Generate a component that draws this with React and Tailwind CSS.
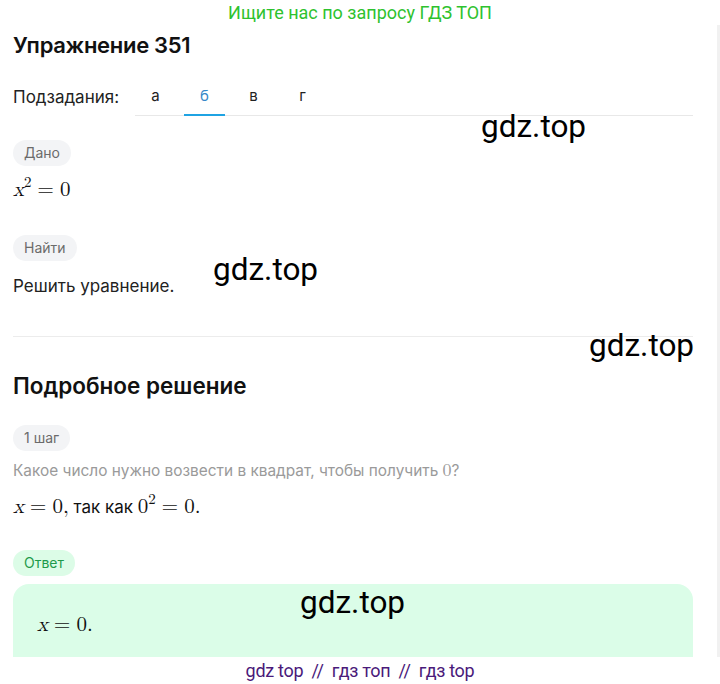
export default function App() {
  const serif = { fontFamily: '"Latin Modern Math", "DejaVu Serif", "Liberation Serif", serif' };
  const pill = "self-start h-[26px] leading-[26px] px-[11px] rounded-full text-[14px]";
  const wm = "absolute text-[31.5px] leading-[34px] text-black";
  const roboto = { fontFamily: 'Roboto, sans-serif' };
  return (
    <div className="relative w-[720px] h-[684px] bg-white overflow-hidden" style={{ fontFamily: 'Inter, "Noto Sans", sans-serif' }}>
      <div className="h-[25px] leading-[25px] text-center text-[18px] text-[#2ec22e]" style={roboto}>
        Ищите нас по запросу ГДЗ ТОП
      </div>
      <div className="flex h-[632px]">
        <div className="flex-1 flex flex-col pl-[13px] pr-[24px]">
          <h1 className="pt-[6px] text-[22px] leading-[28px] font-semibold text-[#111] tracking-[-0.3px]">Упражнение 351</h1>
          <div className="mt-[19px] flex items-end h-[38px]">
            <div className="w-[122px] h-[38px] leading-[38px] text-[17px] text-[#222]">Подзадания:</div>
            <div className="flex-1 flex gap-[8px] h-[38px] border-b border-[#e8e8e8]">
              <div className="w-[41px] h-[38px] leading-[36px] text-center text-[15px] text-[#222]">а</div>
              <div className="w-[41px] h-[38px] leading-[36px] text-center text-[15px] text-[#3589c8] border-b-2 border-[#1fa3e3] -mb-px">б</div>
              <div className="w-[41px] h-[38px] leading-[36px] text-center text-[15px] text-[#222]">в</div>
              <div className="w-[41px] h-[38px] leading-[36px] text-center text-[15px] text-[#222]">г</div>
            </div>
          </div>
          <div className={`mt-[24px] ${pill} bg-[#f3f4f6] text-[#6b6b6b]`}>Дано</div>
          <div className="mt-[8px] h-[32px] leading-[32px] text-[21px] text-[#111]" style={serif}>
            <i>x</i><sup className="text-[15px] -top-[9px]">2</sup><span className="mx-[6px]">=</span>0
          </div>
          <div className={`mt-[29px] ${pill} bg-[#f3f4f6] text-[#6b6b6b]`}>Найти</div>
          <div className="mt-[13px] h-[24px] leading-[24px] text-[17px] text-[#222]">Решить уравнение.</div>
          <div className="mt-[38px] border-t border-[#ececec]"></div>
          <h2 className="mt-[35px] text-[22.5px] leading-[28px] font-semibold text-[#111]">Подробное решение</h2>
          <div className={`mt-[25px] ${pill} bg-[#f3f4f6] text-[#6b6b6b]`}>1 шаг</div>
          <div className="mt-[7px] h-[24px] leading-[24px] text-[15.4px] text-[#9a9a9a]">
            Какое число нужно возвести в квадрат, чтобы получить <span className="text-[18px]" style={serif}>0</span>?
          </div>
          <div className="mt-[9px] h-[32px] leading-[32px] text-[#111]">
            <span className="text-[21px]" style={serif}><i>x</i><span className="mx-[6px]">=</span>0,</span>
            <span className="text-[17px]"> так как </span>
            <span className="text-[21px]" style={serif}>0<sup className="text-[15px] -top-[9px]">2</sup><span className="mx-[6px]">=</span>0.</span>
          </div>
          <div className={`mt-[27px] ${pill} bg-[#dcfce7] text-[#1e9a4a]`}>Ответ</div>
          <div className="mt-[8px] flex-1 rounded-t-[16px] bg-[#dbfde8] pl-[24px] pt-[25px]">
            <div className="h-[32px] leading-[32px] text-[21px] text-[#111]" style={serif}>
              <i>x</i><span className="mx-[6px]">=</span>0.
            </div>
          </div>
        </div>
        <div className="w-[3px] bg-[#f1f1f1]"></div>
      </div>
      <div className="h-[27px] leading-[27px] text-center text-[18px] text-[#4a1a7a] tracking-[-0.3px]" style={roboto}>
        gdz top <span className="mx-[4px]">//</span> гдз топ <span className="mx-[4px]">//</span> гдз top
      </div>

      <div className={`${wm} left-[481px] top-[110px]`} style={roboto}>gdz.top</div>
      <div className={`${wm} left-[213px] top-[253px]`} style={roboto}>gdz.top</div>
      <div className={`${wm} left-[589px] top-[329px]`} style={roboto}>gdz.top</div>
      <div className={`${wm} left-[300px] top-[586px]`} style={roboto}>gdz.top</div>
    </div>
  );
}
